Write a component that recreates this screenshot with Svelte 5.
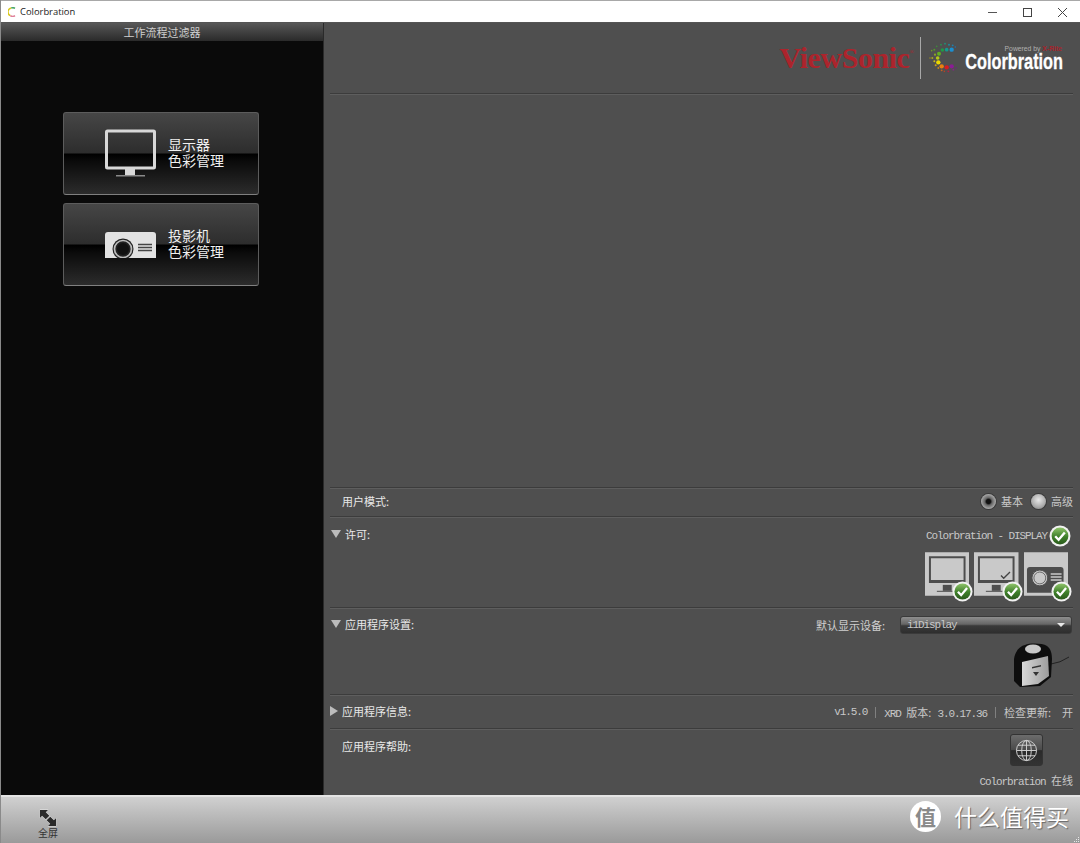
<script>
	// colour wheel dots of the Colorbration mark, in 108x120 units
	const dots = [
		[80, 35, 6.5, '#1c8fd0'], [65, 35, 5.5, '#149a90'], [52, 36, 5.5, '#1f9a48'], [42, 47, 6, '#62b020'],
		[38, 60, 5.5, '#b4c818'], [40, 73, 6.5, '#ecd800'], [50, 85, 6.5, '#e88010'], [65, 88, 6.5, '#d81c20'], [80, 85, 6.5, '#8a1c94'],
		[35, 25, 2.6, '#3c8a3c'], [48, 20, 2.8, '#2a9050'], [60, 17, 2.8, '#1f9078'], [72, 20, 3, '#1c8a98'], [83, 22, 2.8, '#1c80b0'], [91, 27, 2.4, '#2070b0'],
		[28, 35, 3, '#50982c'], [20, 38, 2.4, '#709a28'], [30, 50, 3.2, '#88a824'], [22, 60, 3, '#a8a820'], [15, 60, 2.2, '#988f20'],
		[28, 70, 3, '#c8b818'], [32, 82, 3, '#d0a018'], [40, 90, 2.8, '#c88818'], [50, 97, 2.8, '#c86020'], [58, 100, 2.4, '#c04020'],
		[70, 100, 2.8, '#b82040'], [85, 95, 2.8, '#882088'], [93, 90, 2.4, '#702080']
	];
</script>

{#snippet badge(cls)}
	<svg class="badge {cls}" viewBox="0 0 22 22">
		<defs>
			<linearGradient id="g-{cls}" x1="0" y1="0" x2="0" y2="1">
				<stop offset="0" stop-color="#8fc46a" />
				<stop offset=".55" stop-color="#3e7f2a" />
				<stop offset="1" stop-color="#2a5a1c" />
			</linearGradient>
		</defs>
		<circle cx="11" cy="11" r="10.5" fill="#f2f2f2" />
		<circle cx="11" cy="11" r="8.4" fill="url(#g-{cls})" />
		<path d="M6.2 11.2l3.4 3.6 6.2-7.4" fill="none" stroke="#fff" stroke-width="2.4" />
	</svg>
{/snippet}

{#snippet monitor()}
	<svg viewBox="0 0 45 44" class="tile-art">
		<rect width="45" height="44" fill="#c9c9c9" />
		<path d="M4 4h37v27H4zM6 6v22h33V6z" fill="#4d4d4d" fill-rule="evenodd" />
		<rect x="18" y="33" width="9" height="6" fill="#4d4d4d" />
		<rect x="12" y="39" width="18" height="1" fill="#4d4d4d" />
	</svg>
{/snippet}

<div class="app">
	<header class="titlebar">
		<svg class="app-icon" viewBox="0 0 8 10">
			<path d="M7 1.300A4 4 0 0 0 3.200 1" fill="none" stroke="#4aa86a" stroke-width="1.500" />
			<path d="M3.200 1A4 4 0 0 0 2.400 8.600" fill="none" stroke="#d8c820" stroke-width="1.500" />
			<path d="M2.400 8.600A4 4 0 0 0 7 8.700" fill="none" stroke="#e0809a" stroke-width="1.500" />
		</svg>
		<span class="app-title">Colorbration</span>
		<div class="win-controls">
			<svg viewBox="0 0 35 22"><path d="M13 11.500h9" stroke="#555" fill="none" /></svg>
			<svg viewBox="0 0 35 22"><rect x="13.500" y="7.500" width="8" height="8" stroke="#444" fill="none" /></svg>
			<svg viewBox="0 0 35 22"><path d="M13 7l9 9M22 7l-9 9" stroke="#444" fill="none" /></svg>
		</div>
	</header>

	<div class="main">
		<aside class="left">
			<div class="left-head">工作流程过滤器</div>
			<div class="workflows">
				<button class="wf">
					<svg class="wf-icon" viewBox="0 0 52 52">
						<rect x="1.500" y="3" width="48" height="37" rx="1" fill="none" stroke="#d8d8d8" stroke-width="3" />
						<rect x="20" y="41" width="10" height="6" fill="#d8d8d8" />
						<rect x="11" y="47" width="29" height="1.500" fill="#8a8a8a" />
					</svg>
					<span>显示器<br />色彩管理</span>
				</button>
				<button class="wf">
					<svg class="wf-icon projector" viewBox="0 0 52 39">
						<path d="M0 39V16a3 3 0 0 1 3-3h45a3 3 0 0 1 3 3v23z" fill="#e2e2e2" />
						<circle cx="18" cy="30" r="10.500" fill="#222" />
						<circle cx="18" cy="30" r="8.500" fill="none" stroke="#bdbdbd" stroke-width="1.700" />
						<circle cx="18" cy="30" r="6" fill="#111" />
						<path d="M33 25.500h14M33 28.500h14M33 31.500h14" stroke="#444" stroke-width="1.700" fill="none" />
					</svg>
					<span>投影机<br />色彩管理</span>
				</button>
			</div>
		</aside>

		<section class="right">
			<div class="brand">
				<span class="viewsonic">ViewSonic<sup>®</sup></span>
				<i class="brand-sep"></i>
				<svg class="dots" viewBox="0 0 108 120">
					{#each dots as d}
						<circle cx={d[0]} cy={d[1]} r={d[2]} fill={d[3]} />
					{/each}
				</svg>
				<div class="cb">
					<small>Powered by <b>X-Rite</b></small>
					<strong>Colorbration</strong>
				</div>
			</div>

			<div class="spacer"></div>

			<div class="row mode">
				<span class="label plain">用户模式:</span>
				<div class="radios">
					<i class="radio on"></i><span>基本</span>
					<i class="radio"></i><span>高级</span>
				</div>
			</div>

			<div class="row license">
				<i class="tri down"></i>
				<span class="label">许可:</span>
				<div class="license-side">
					<div class="license-name"><span class="mono">Colorbration - DISPLAY</span>{@render badge('b1')}</div>
					<div class="tiles">
						<div class="tile">{@render monitor()}{@render badge('b2')}</div>
						<div class="tile">
							{@render monitor()}
							<svg class="tick" viewBox="0 0 12 10"><path d="M1 5l3 3 7-7" fill="none" stroke="#444" stroke-width="1.500" /></svg>
							{@render badge('b3')}
						</div>
						<div class="tile">
							<svg viewBox="0 0 45 44" class="tile-art">
								<rect width="45" height="44" fill="#c9c9c9" />
								<path d="M3 41V18a3 3 0 0 1 3-3h31a3 3 0 0 1 3 3v23z" fill="#4d4d4d" />
								<circle cx="16" cy="26" r="8" fill="#c9c9c9" stroke="#4d4d4d" />
								<circle cx="16" cy="26" r="6" fill="none" stroke="#6a6a6a" />
								<path d="M27 22h11M27 25h11M27 28h11" stroke="#c9c9c9" stroke-width="1.500" />
							</svg>
							{@render badge('b4')}
						</div>
					</div>
				</div>
			</div>

			<div class="row settings">
				<i class="tri down"></i>
				<span class="label">应用程序设置:</span>
				<div class="settings-side">
					<div class="device-line">
						<span class="dev-label">默认显示设备:</span>
						<div class="select"><span class="mono">i1Display</span><i></i></div>
					</div>
					<svg class="sensor" viewBox="0 0 56 46">
						<defs>
							<linearGradient id="silver" x1="0" y1="0" x2="1" y2="0">
								<stop offset="0" stop-color="#d8d8d8" />
								<stop offset="1" stop-color="#9c9c9c" />
							</linearGradient>
						</defs>
						<path d="M37 21Q46 20 55 14" fill="none" stroke="#222" stroke-width="1" />
						<path d="M0 16C1 8 6 3 11 2 16 0 28 0 33 3 37 6 38 11 38 16L37 34 26 43 6 44 0 38z" fill="#0e0e0e" />
						<ellipse cx="19" cy="6" rx="8" ry="4.500" fill="#c8c8c8" />
						<path d="M8 19L34 13 35 33 24 41 8 43z" fill="url(#silver)" />
						<path d="M18 24l9-2v1.500l-9 2zM19 29h6l-3 4z" fill="#333" />
					</svg>
				</div>
			</div>

			<div class="row info">
				<i class="tri side"></i>
				<span class="label">应用程序信息:</span>
				<div class="info-side mono">
					<span>v1.5.0</span><i></i><span>XRD <span class="cjk ver">版本:</span>3.0.17.36</span><i></i><span class="cjk">检查更新:</span><span class="cjk on-off">开</span>
				</div>
			</div>

			<div class="row help">
				<span class="label plain">应用程序帮助:</span>
				<div class="help-side">
					<div class="globe-btn">
						<svg viewBox="0 0 24 24">
							<g fill="none" stroke="#d0d0d0" stroke-width="1">
								<circle cx="12" cy="12" r="10.500" />
								<ellipse cx="12" cy="12" rx="5" ry="10.500" />
								<path d="M12 1.500v21M1.500 12h21M3 6.500h18M3 17.500h18" />
							</g>
						</svg>
					</div>
					<span class="mono">Colorbration <span class="cjk">在线</span></span>
				</div>
			</div>
		</section>
	</div>

	<footer class="bottom">
		<div class="fullscreen">
			<svg viewBox="0 0 20 20">
				<g fill="#2b2b2b" stroke="#f0f0f0" stroke-width=".8" paint-order="stroke">
					<path d="M1 1h9L7.500 3.500l4 4-4 4-4-4L1 10z" />
					<path d="M19 19h-9l2.500-2.500-4-4 4-4 4 4L19 10z" />
				</g>
			</svg>
			<span>全屏</span>
		</div>
		<div class="watermark">
			<span class="wm-circle">值</span>
			<span class="wm-text">什么值得买</span>
		</div>
		<svg class="grip" viewBox="0 0 6 6">
			<path d="M4 0h1v1H4zM2 2h1v1H2zM4 2h1v1H4zM0 4h1v1H0zM2 4h1v1H2zM4 4h1v1H4z" fill="#e8e8e8" />
		</svg>
	</footer>
</div>

<style>
	:global(body) {
		background: #000;
	}

	.app {
		width: 1080px;
		height: 843px;
		box-sizing: border-box;
		border-left: 1px solid #8a8a8a;
		display: flex;
		flex-direction: column;
		overflow: hidden;
		font-family: "Noto Sans CJK SC", "Liberation Sans", sans-serif;
		font-size: 11px;
		color: #dcdcdc;
	}

	.titlebar {
		flex: none;
		height: 23px;
		box-sizing: border-box;
		background: #fff;
		border-top: 1px solid #a8a8a8;
		border-bottom: 1px solid #555;
		display: flex;
		align-items: center;
		padding-left: 7px;
		color: #222;
	}

	.app-icon {
		width: 8px;
		height: 10px;
	}

	.app-title {
		margin-left: 4px;
		font-family: "Open Sans", "Liberation Sans", sans-serif;
		font-size: 9.400px;
	}

	.win-controls {
		margin-left: auto;
		display: flex;
	}

	.win-controls svg {
		width: 35px;
		height: 22px;
	}

	.main {
		flex: 1;
		min-height: 0;
		display: flex;
	}

	.left {
		width: 322px;
		flex: none;
		background: #0a0a0a;
		display: flex;
		flex-direction: column;
	}

	.left-head {
		height: 18px;
		flex: none;
		background: linear-gradient(#585858, #2a2a2a);
		text-align: center;
		line-height: 18px;
		color: #cfcfcf;
	}

	.workflows {
		padding: 71px 64px 0 62px;
		display: flex;
		flex-direction: column;
		gap: 8px;
	}

	.wf {
		height: 83px;
		padding: 0 0 0 41px;
		display: flex;
		align-items: center;
		gap: 11px;
		border: 1px solid #5c5c5c;
		border-bottom-color: #808080;
		border-radius: 3px;
		background: linear-gradient(#464646 0, #2d2d2d 49%, #000 51%, #0b0b0b 60%, #2c2c2c 100%);
		font: inherit;
		font-size: 14px;
		line-height: 16px;
		color: #f0f0f0;
		text-align: left;
	}

	.wf span {
		padding-bottom: 4px;
	}

	.wf-icon {
		width: 52px;
		height: 52px;
		flex: none;
	}

	.wf-icon.projector {
		height: 39px;
		margin-bottom: 13px;
	}

	.right {
		flex: 1;
		background: #4f4f4f;
		border-left: 1px solid #2a2a2a;
		padding: 0 7px 0 6px;
		display: flex;
		flex-direction: column;
	}

	.brand {
		height: 71px;
		flex: none;
		box-sizing: border-box;
		border-bottom: 1px solid #3c3c3c;
		box-shadow: 0 1px 0 #5e5e5e;
		display: flex;
		align-items: center;
		justify-content: flex-end;
		padding: 0 10px 0 0;
	}

	.viewsonic {
		font-family: "Liberation Serif", serif;
		font-weight: 700;
		font-size: 30px;
		letter-spacing: -.45px;
		color: #ac242c;
		margin-bottom: 1px;
	}

	.viewsonic sup {
		font-size: 6px;
		font-weight: 400;
		vertical-align: 14px;
		letter-spacing: 0;
		line-height: 0;
	}

	.brand-sep {
		width: 1px;
		height: 42px;
		background: #a8a8a8;
		margin: 0 4px 0 6px;
	}

	.dots {
		width: 36px;
		height: 40px;
		margin-right: 5px;
	}

	.cb {
		width: 97px;
		display: flex;
		flex-direction: column;
		align-items: flex-end;
		line-height: 1;
		margin-top: 2px;
	}

	.cb small {
		font-family: "Liberation Sans", sans-serif;
		font-size: 6.800px;
		color: #b0b0b0;
		margin: 0 1px -1px 0;
	}

	.cb small b {
		color: #a5242c;
	}

	.cb strong {
		font-family: "Liberation Sans", sans-serif;
		font-size: 22px;
		line-height: 21px;
		color: #fff;
		white-space: nowrap;
		transform: scaleX(.74);
		transform-origin: right;
		-webkit-text-stroke: .3px #fff;
	}

	.spacer {
		flex: 1;
	}

	.row {
		flex: none;
		box-sizing: border-box;
		border-top: 1px solid #3c3c3c;
		box-shadow: inset 0 1px 0 #5e5e5e;
		display: flex;
		align-items: flex-start;
		position: relative;
	}

	.label {
		margin: -1px 0 0 4px;
		color: #e8e8e8;
		line-height: 14px;
	}

	.label.plain {
		margin-left: 12px;
	}

	.mono {
		font-family: "Liberation Mono", "Noto Sans CJK SC", monospace;
		font-size: 11px;
		letter-spacing: -1.100px;
		color: #c8c8c8;
	}

	.cjk {
		font-family: "Noto Sans CJK SC", sans-serif;
		letter-spacing: 0;
	}

	.cjk.ver {
		margin-right: 6px;
	}

	.tri {
		flex: none;
		width: 0;
		height: 0;
	}

	.tri.down {
		border-left: 5px solid transparent;
		border-right: 5px solid transparent;
		border-top: 8px solid #bcbcbc;
		margin: 2px 0 0 1px;
	}

	.tri.side {
		border-top: 5px solid transparent;
		border-bottom: 5px solid transparent;
		border-left: 8px solid #bcbcbc;
		margin: 1px 0 0 0;
	}

	.mode {
		height: 29px;
		align-items: center;
	}

	.mode .label {
		margin-top: -2px;
	}

	.radios {
		margin: -2px 0 0 auto;
		display: flex;
		align-items: center;
		color: #c8c8c8;
	}

	.radio {
		width: 15px;
		height: 15px;
		border-radius: 50%;
		margin: 0 5px 0 8px;
		background: radial-gradient(circle at 50% 40%, #e8e8e8 0, #b0b0b0 55%, #777 100%);
		box-shadow: 0 0 0 1px #3a3a3a;
	}

	.radio.on {
		background: radial-gradient(circle, #111 0 20%, #666 35%, #aaa 70%, #777 100%);
	}

	.license {
		height: 91px;
		padding-top: 11px;
	}

	.license-side {
		margin-left: auto;
		display: flex;
		flex-direction: column;
		align-items: flex-end;
		padding-right: 2px;
	}

	.license-name {
		display: flex;
		align-items: center;
		height: 20px;
		margin-top: -2px;
	}

	.license-name .badge {
		position: static;
		width: 22px;
		height: 22px;
		margin-left: 2px;
	}

	.tiles {
		display: flex;
		gap: 5px;
		margin-top: 6px;
		padding-right: 3px;
	}

	.tile {
		width: 44.500px;
		height: 44px;
		position: relative;
	}

	.tile-art {
		display: block;
		width: 100%;
		height: 44px;
	}

	.badge {
		position: absolute;
		right: -4px;
		bottom: -6px;
		width: 21px;
		height: 21px;
	}

	.tick {
		position: absolute;
		right: 8px;
		bottom: 16px;
		width: 11px;
		height: 9px;
	}

	.settings {
		height: 87px;
		padding-top: 10px;
	}

	.settings-side {
		margin-left: auto;
		display: flex;
		flex-direction: column;
		align-items: flex-end;
		padding-right: 1px;
	}

	.device-line {
		display: flex;
		align-items: center;
		margin-top: -2px;
	}

	.dev-label {
		color: #cfcfcf;
		margin-right: 15px;
	}

	.select {
		width: 172px;
		height: 18px;
		box-sizing: border-box;
		border: 1px solid #3a3a3a;
		border-radius: 3px;
		background: linear-gradient(#8e8e8e, #666 45%, #3a3a3a 55%, #2e2e2e);
		display: flex;
		align-items: center;
		justify-content: space-between;
		padding: 0 6px;
	}

	.select i {
		width: 0;
		height: 0;
		border-left: 4px solid transparent;
		border-right: 4px solid transparent;
		border-top: 4px solid #e8e8e8;
	}

	.sensor {
		width: 56px;
		height: 46px;
		margin-top: 9px;
		margin-right: 2px;
	}

	.info {
		height: 34px;
		padding-top: 10px;
	}

	.info-side {
		margin-left: auto;
		display: flex;
		align-items: center;
		height: 14px;
	}

	.info-side i {
		width: 1px;
		height: 11px;
		background: #808080;
		margin: 0 8px;
	}

	.info-side .on-off {
		margin-left: 11px;
	}

	.help {
		height: 67px;
		padding-top: 11px;
	}

	.help-side {
		margin-left: auto;
		display: flex;
		flex-direction: column;
		align-items: flex-end;
	}

	.globe-btn {
		width: 33px;
		height: 32px;
		box-sizing: border-box;
		margin: -6px 30px 0 0;
		border: 1px solid #333;
		border-radius: 3px;
		background: linear-gradient(#6c6c6c, #4a4a4a 50%, #2a2a2a 52%, #333);
		display: flex;
		align-items: center;
		justify-content: center;
	}

	.globe-btn svg {
		width: 23px;
		height: 23px;
	}

	.help-side .mono {
		margin-top: 7px;
		line-height: 14px;
	}

	.bottom {
		flex: none;
		height: 48px;
		box-sizing: border-box;
		border-top: 2px solid #e4e4e4;
		background: linear-gradient(#d0d0d0, #9a9a9a);
		display: flex;
		justify-content: space-between;
		position: relative;
	}

	.fullscreen {
		margin: 12px 0 0 37px;
		display: flex;
		flex-direction: column;
		align-items: center;
		color: #333;
		font-size: 10px;
		line-height: 12px;
	}

	.fullscreen svg {
		width: 18px;
		height: 18px;
	}

	.watermark {
		display: flex;
		align-items: center;
		gap: 13px;
		padding: 0 11px 8px 0;
	}

	.wm-circle {
		width: 31px;
		height: 31px;
		border-radius: 50%;
		background: #fff;
		color: #8a8a8a;
		font-size: 21px;
		font-weight: 700;
		display: flex;
		align-items: center;
		justify-content: center;
	}

	.wm-text {
		font-size: 23px;
		line-height: 30px;
		color: #fff;
		text-shadow: 1px 1px 1px #666;
	}

	.grip {
		position: absolute;
		right: 0;
		bottom: 0;
		width: 6px;
		height: 6px;
	}
</style>
